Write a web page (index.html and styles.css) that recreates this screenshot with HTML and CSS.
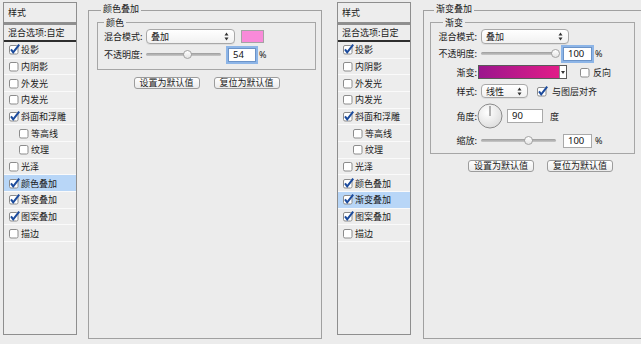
FILE: index.html
```html
<!DOCTYPE html>
<html lang="zh-CN">
<head>
  <meta charset="UTF-8">
  <title>图层样式</title>
  <meta name="viewport" content="width=device-width, initial-scale=1.0">
  <link rel="stylesheet" href="styles.css">
</head>
<body>
  <!-- 共用图标 -->
  <svg class="defs" width="0" height="0" aria-hidden="true">
    <symbol id="box" viewBox="0 0 11 11">
      <rect x="0.5" y="1.5" width="8.5" height="8.5" rx="1.5" fill="#fff" stroke="#8c8c8c"/>
    </symbol>
    <symbol id="tick" viewBox="0 0 11 11">
      <rect x="0.5" y="1.5" width="8.5" height="8.5" rx="1.5" fill="#fff" stroke="#8c8c8c"/>
      <path d="M2 5.3 L4.2 8.4 L10.2 0.6" fill="none" stroke="#1c4b9c" stroke-width="2"/>
    </symbol>
    <symbol id="updown" viewBox="0 0 5 9">
      <path d="M2.5 0.5 L4.5 3.4 H0.5Z M2.5 8.5 L4.5 5.6 H0.5Z" fill="#333"/>
    </symbol>
  </svg>

  <div class="screen">

    <!-- 对话框 1：颜色叠加 -->
    <ul class="style-list">
      <li class="list-head">样式</li>
      <li class="list-blend">混合选项:自定</li>
      <li class="row"><svg class="cb"><use href="#tick"/></svg>投影</li>
      <li class="row"><svg class="cb"><use href="#box"/></svg>内阴影</li>
      <li class="row"><svg class="cb"><use href="#box"/></svg>外发光</li>
      <li class="row"><svg class="cb"><use href="#box"/></svg>内发光</li>
      <li class="row"><svg class="cb"><use href="#tick"/></svg>斜面和浮雕</li>
      <li class="row sub"><svg class="cb"><use href="#box"/></svg>等高线</li>
      <li class="row sub"><svg class="cb"><use href="#box"/></svg>纹理</li>
      <li class="row"><svg class="cb"><use href="#box"/></svg>光泽</li>
      <li class="row sel"><svg class="cb"><use href="#tick"/></svg>颜色叠加</li>
      <li class="row"><svg class="cb"><use href="#tick"/></svg>渐变叠加</li>
      <li class="row"><svg class="cb"><use href="#tick"/></svg>图案叠加</li>
      <li class="row"><svg class="cb"><use href="#box"/></svg>描边</li>
    </ul>

    <fieldset class="panel panel-color">
      <legend>颜色叠加</legend>
      <fieldset class="group group-color">
        <legend>颜色</legend>
        <div class="field">
          <span class="label">混合模式:</span>
          <div class="select sel-blend">叠加<svg class="arrows"><use href="#updown"/></svg></div>
          <span class="swatch"></span>
        </div>
        <div class="field">
          <span class="label">不透明度:</span>
          <div class="slider"><span class="thumb" style="left: 54%"></span></div>
          <div class="num focus">54</div>
          <span class="unit">%</span>
        </div>
      </fieldset>
      <div class="buttons">
        <button class="btn">设置为默认值</button>
        <button class="btn">复位为默认值</button>
      </div>
    </fieldset>

    <!-- 对话框 2：渐变叠加 -->
    <ul class="style-list list-two">
      <li class="list-head">样式</li>
      <li class="list-blend">混合选项:自定</li>
      <li class="row"><svg class="cb"><use href="#tick"/></svg>投影</li>
      <li class="row"><svg class="cb"><use href="#box"/></svg>内阴影</li>
      <li class="row"><svg class="cb"><use href="#box"/></svg>外发光</li>
      <li class="row"><svg class="cb"><use href="#box"/></svg>内发光</li>
      <li class="row"><svg class="cb"><use href="#tick"/></svg>斜面和浮雕</li>
      <li class="row sub"><svg class="cb"><use href="#box"/></svg>等高线</li>
      <li class="row sub"><svg class="cb"><use href="#box"/></svg>纹理</li>
      <li class="row"><svg class="cb"><use href="#box"/></svg>光泽</li>
      <li class="row"><svg class="cb"><use href="#tick"/></svg>颜色叠加</li>
      <li class="row sel"><svg class="cb"><use href="#tick"/></svg>渐变叠加</li>
      <li class="row"><svg class="cb"><use href="#tick"/></svg>图案叠加</li>
      <li class="row"><svg class="cb"><use href="#box"/></svg>描边</li>
    </ul>

    <fieldset class="panel panel-grad">
      <legend>渐变叠加</legend>
      <fieldset class="group group-grad">
        <legend>渐变</legend>
        <div class="field f-blend">
          <span class="label">混合模式:</span>
          <div class="select sel-blend2">叠加<svg class="arrows"><use href="#updown"/></svg></div>
        </div>
        <div class="field f-opacity">
          <span class="label">不透明度:</span>
          <div class="slider"><span class="thumb" style="left: 99%"></span></div>
          <div class="num focus">100</div>
          <span class="unit">%</span>
        </div>
        <div class="field f-grad">
          <span class="label">渐变:</span>
          <div class="gradient">
            <span class="grad-fill"></span>
            <span class="grad-drop"></span>
          </div>
          <svg class="cb cb-reverse"><use href="#box"/></svg>
          <span>反向</span>
        </div>
        <div class="field f-style">
          <span class="label">样式:</span>
          <div class="select sel-style">线性<svg class="arrows"><use href="#updown"/></svg></div>
          <svg class="cb cb-align"><use href="#tick"/></svg>
          <span>与图层对齐</span>
        </div>
        <div class="field f-angle">
          <span class="label">角度:</span>
          <svg class="dial" viewBox="0 0 26 26">
            <defs>
              <radialGradient id="dialFill" cx="0.4" cy="0.35" r="0.7">
                <stop offset="0" stop-color="#ffffff"/>
                <stop offset="1" stop-color="#dcdcdc"/>
              </radialGradient>
            </defs>
            <circle cx="13" cy="13" r="12" fill="url(#dialFill)" stroke="#8a8a8a"/>
            <line x1="13" y1="13" x2="13" y2="3" stroke="#6a6a6a" stroke-width="1"/>
          </svg>
          <div class="num angle">90</div>
          <span class="unit deg">度</span>
        </div>
        <div class="field f-scale">
          <span class="label">缩放:</span>
          <div class="slider"><span class="thumb" style="left: 62%"></span></div>
          <div class="num">100</div>
          <span class="unit">%</span>
        </div>
      </fieldset>
      <div class="buttons buttons-left">
        <button class="btn">设置为默认值</button>
        <button class="btn">复位为默认值</button>
      </div>
    </fieldset>

  </div>
</body>
</html>
```

FILE: styles.css
```css
* {
  box-sizing: border-box;
}

body {
  margin: 0;
  background-color: #ececec;
  font-family: "Noto Sans CJK SC", "Noto Sans", sans-serif;
  font-size: 9px;
  color: #1b1b1b;
}

.defs {
  position: absolute;
}

.screen {
  display: flex;
  align-items: flex-start;
  width: 641px;
  height: 344px;
  overflow: hidden;
  padding: 2px 0 0 3px;
}

/* 样式列表 */
.style-list {
  flex: none;
  width: 74px;
  height: 333px;
  margin: 0;
  padding: 0;
  list-style: none;
  background-color: #ededed;
  border: 1px solid #8e8e8e;
}

.list-two {
  margin-left: 15px;
}

.list-head {
  height: 22px;
  line-height: 19px;
  padding-left: 4px;
  border-bottom: 3px solid #8f8f8f;
}

.list-blend {
  height: 17px;
  line-height: 15px;
  padding-left: 4px;
  border-bottom: 2px solid #2e2e2e;
}

.row {
  display: flex;
  align-items: center;
  height: 16.67px;
  padding-left: 5px;
  border-bottom: 1px solid #fafafa;
}

.row.sub {
  padding-left: 15px;
}

.row.sel {
  background-color: #b8d6f7;
}

.cb {
  flex: none;
  width: 11px;
  height: 11px;
  margin-right: 1px;
}

/* 面板 */
.panel {
  flex: none;
  margin: 2px 0 0 11px;
  width: 234px;
  height: 335px;
  padding: 0 5px 0 8px;
  border: 1px solid #a0a0a0;
  min-width: 0;
}

.panel > legend {
  margin-left: 4px;
  padding: 0 2px 3px;
  font-size: 9px;
  line-height: 10px;
}

.group > legend {
  padding: 1px 2px 0;
  font-size: 9px;
  line-height: 10px;
}

.panel-grad {
  margin-left: 12px;
  width: 240px;
  padding: 0 6px;
}

.group {
  margin: 0;
  padding: 1px 0 7px 6px;
  border: 1px solid #a6a6a6;
  min-width: 0;
}

.group-grad {
  width: 205px;
  padding: 0 0 5px 5px;
}

.group-grad > legend {
  margin-left: 7px;
}

.field {
  display: flex;
  align-items: center;
  height: 15px;
  white-space: nowrap;
}

.field + .field {
  margin-top: 3px;
}

.label {
  flex: none;
  width: 42px;
}

.group-grad .label {
  width: 45px;
  padding-right: 4px;
  text-align: right;
}

.select {
  flex: none;
  display: flex;
  align-items: center;
  justify-content: space-between;
  height: 15px;
  padding: 0 5px 0 4px;
  border: 1px solid #a8a8a8;
  border-radius: 4px;
  background: linear-gradient(#ffffff, #f1f1f1);
  box-shadow: 0 1px 0 rgba(0, 0, 0, 0.06);
}

.arrows {
  width: 5px;
  height: 9px;
}

.sel-blend {
  width: 89px;
}

.sel-blend2 {
  width: 88px;
}

.sel-style {
  width: 47px;
  height: 14px;
}

.swatch {
  flex: none;
  width: 23px;
  height: 13px;
  margin-left: 6px;
  background-color: #f98ad9;
  border: 1px solid #a4a4a4;
}

.slider {
  flex: none;
  position: relative;
  width: 75px;
  height: 3px;
  border-radius: 2px;
  background: linear-gradient(#9c9c9c, #c9c9c9);
}

.thumb {
  position: absolute;
  top: -3px;
  width: 9px;
  height: 9px;
  margin-left: -4px;
  border-radius: 50%;
  background: linear-gradient(#ffffff, #e4e4e4);
  border: 1px solid #a3a3a3;
}

.num {
  flex: none;
  width: 28px;
  height: 14px;
  margin-left: 7px;
  padding-left: 4px;
  line-height: 12px;
  font-family: "Noto Sans", sans-serif;
  font-size: 9.5px;
  color: #111;
  background-color: #fff;
  border: 1px solid #a9a9a9;
}

.num.focus {
  border-color: #6b93c8;
  box-shadow: 0 0 0 2px #8db5e7;
}

.group-grad .num {
  width: 29px;
}

.unit {
  margin-left: 3px;
  font-family: "Noto Sans", sans-serif;
}

/* 渐变行 */
.f-blend {
  margin-top: 1px;
}

.group-grad .f-opacity {
  margin-top: 2px;
}

.group-grad .f-grad {
  height: 14px;
  margin-top: 4px;
}

.gradient {
  flex: none;
  display: flex;
  width: 89px;
  height: 14px;
  margin-left: -3px;
  border: 1px solid #5a5a5a;
}

.grad-fill {
  flex: 1;
  background: linear-gradient(90deg, #9b168d, #e21d88);
}

.grad-drop {
  flex: none;
  width: 7px;
  background: #fff;
  border-left: 1px solid #8a8a8a;
  position: relative;
}

.grad-drop::after {
  content: "";
  position: absolute;
  left: 1px;
  top: 5px;
  border-left: 2px solid transparent;
  border-right: 2px solid transparent;
  border-top: 3px solid #333;
}

.cb-reverse {
  margin-left: 13px;
  margin-right: 2px;
}

.group-grad .f-style {
  height: 14px;
  margin-top: 5px;
}

.cb-align {
  margin-left: 9px;
  margin-right: 4px;
}

.group-grad .f-angle {
  height: 26px;
  margin-top: 5px;
}

.dial {
  flex: none;
  width: 26px;
  height: 26px;
  margin-left: -4px;
}

.num.angle {
  width: 36px;
  margin-left: 4px;
}

.unit.deg {
  margin-left: 7px;
}

.group-grad .f-scale {
  margin-top: 4px;
}

/* 按钮 */
.buttons {
  display: flex;
  justify-content: center;
  gap: 14px;
  margin-top: 7px;
}

.buttons-left {
  justify-content: flex-start;
  gap: 13px;
  margin-top: 6px;
  padding-left: 38px;
}

.btn {
  width: 66px;
  height: 12px;
  padding: 0;
  font-family: "Noto Sans CJK SC", sans-serif;
  font-size: 9px;
  line-height: 10px;
  color: #1b1b1b;
  background: linear-gradient(#ffffff, #ebebeb);
  border: 1px solid #9c9c9c;
  border-radius: 3px;
}
```
